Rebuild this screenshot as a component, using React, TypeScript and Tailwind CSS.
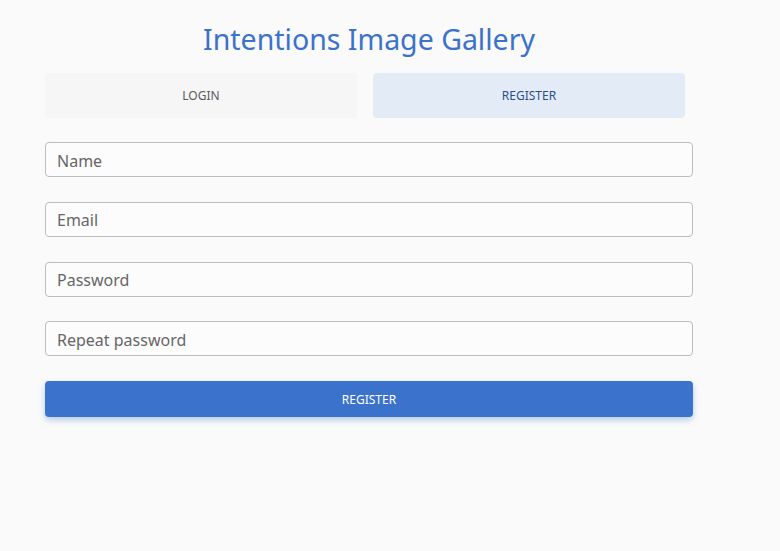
import React from 'react';

const fields = ['Name', 'Email', 'Password', 'Repeat password'];

export default function App() {
  return (
    <div
      className="min-h-[551px] w-full bg-[#fafafa]"
      style={{ fontFamily: '"Noto Sans", "Open Sans", sans-serif' }}
    >
      <div className="ml-[45px] w-[648px] pt-[19px]">
        <h1 className="text-center text-[28.5px] leading-[40px] text-[#3a72cc]">
          Intentions Image Gallery
        </h1>
        <div className="mt-[14px] flex w-[640px] gap-[16px]">
          <button className="h-[45px] flex-1 rounded-[4px] bg-[#f6f6f6] text-[12px] text-[#5a5a5a]">
            LOGIN
          </button>
          <button className="h-[45px] flex-1 rounded-[4px] bg-[#e3ebf7] text-[12px] text-[#2c4f8c]">
            REGISTER
          </button>
        </div>
        <form className="mt-[24px] flex flex-col gap-[24.75px]">
          {fields.map((f) => (
            <input
              key={f}
              placeholder={f}
              type={f.includes('assword') ? 'password' : 'text'}
              className="h-[35px] w-full rounded-[4px] border border-[#bdbdbd] bg-[#fcfcfc] px-[11px] pt-[2px] text-[16px] text-[#555] placeholder:text-[#666] outline-none"
            />
          ))}
          <button
            type="button"
            className="h-[36px] w-full rounded-[4px] bg-[#3a72cc] pt-[1px] text-[12px] text-white shadow-[0_3px_6px_rgba(58,114,204,0.35)]"
          >
            REGISTER
          </button>
        </form>
      </div>
    </div>
  );
}
